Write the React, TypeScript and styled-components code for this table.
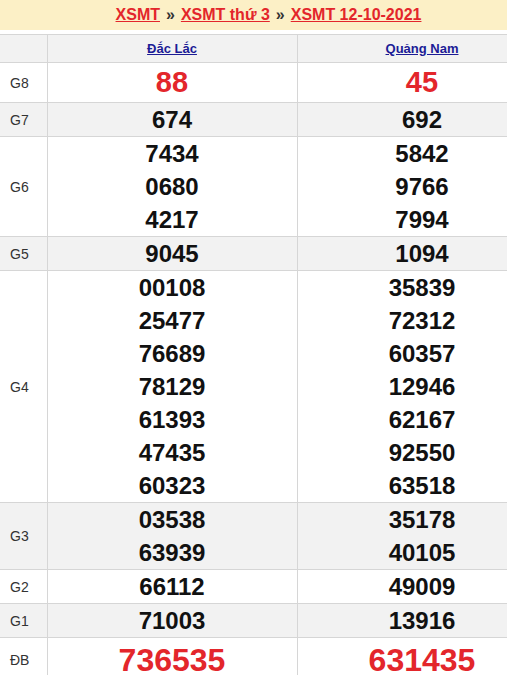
import React from 'react';
import styled, { createGlobalStyle } from 'styled-components';

const GlobalStyle = createGlobalStyle`
  html, body {
    margin: 0;
    padding: 0;
    overflow: hidden;
    background: #fff;
    font-family: "Liberation Sans", Arial, sans-serif;
  }
`;

const Page = styled.div`
  width: 507px;
`;

const Banner = styled.div`
  height: 30px;
  background: #fcf0c6;
  margin-bottom: 4px;
  padding-left: 30px;
  display: flex;
  align-items: center;
  justify-content: center;
  gap: 6px;
  font-size: 16px;
  font-weight: bold;
  color: #333;
`;

const BannerLink = styled.a`
  color: #e3262b;
  text-decoration: underline;
`;

const Table = styled.table`
  width: 547px;
  border-collapse: collapse;
  table-layout: fixed;
`;

const HeadCell = styled.th`
  background: #f2f2f2;
  border: 1px solid #d6d6d6;
  height: 27px;
  padding: 0;
  font-size: 13px;
  font-weight: bold;
  text-align: center;
  vertical-align: middle;
`;

const HeadLink = styled.a`
  color: #1c1c96;
  text-decoration: underline;
`;

const Row = styled.tr<{ $alt: boolean }>`
  background: ${p => (p.$alt ? '#f2f2f2' : '#fff')};
`;

const Label = styled.td`
  border: 1px solid #d6d6d6;
  border-left: none;
  padding: 0 0 0 10px;
  font-size: 14px;
  color: #333;
  vertical-align: middle;
`;

const Cell = styled.td`
  border: 1px solid #d6d6d6;
  padding: 0;
  text-align: center;
  vertical-align: middle;
`;

const Num = styled.div<{ $size: 'n' | 'g8' | 'db' }>`
  font-weight: bold;
  font-size: ${p => (p.$size === 'db' ? '32px' : p.$size === 'g8' ? '29px' : '24px')};
  line-height: ${p => (p.$size === 'db' ? '44px' : p.$size === 'g8' ? '39px' : '33px')};
  color: ${p => (p.$size === 'n' ? '#111' : '#e3262b')};
`;

type Prize = { name: string; a: string[]; b: string[]; size: 'n' | 'g8' | 'db' };

const prizes: Prize[] = [
  { name: 'G8', a: ['88'], b: ['45'], size: 'g8' },
  { name: 'G7', a: ['674'], b: ['692'], size: 'n' },
  { name: 'G6', a: ['7434', '0680', '4217'], b: ['5842', '9766', '7994'], size: 'n' },
  { name: 'G5', a: ['9045'], b: ['1094'], size: 'n' },
  {
    name: 'G4',
    a: ['00108', '25477', '76689', '78129', '61393', '47435', '60323'],
    b: ['35839', '72312', '60357', '12946', '62167', '92550', '63518'],
    size: 'n',
  },
  { name: 'G3', a: ['03538', '63939'], b: ['35178', '40105'], size: 'n' },
  { name: 'G2', a: ['66112'], b: ['49009'], size: 'n' },
  { name: 'G1', a: ['71003'], b: ['13916'], size: 'n' },
  { name: 'ĐB', a: ['736535'], b: ['631435'], size: 'db' },
];

export default function App() {
  return (
    <Page>
      <GlobalStyle />
      <Banner>
        <BannerLink href="#">XSMT</BannerLink>
        <span>»</span>
        <BannerLink href="#">XSMT thứ 3</BannerLink>
        <span>»</span>
        <BannerLink href="#">XSMT 12-10-2021</BannerLink>
      </Banner>
      <Table>
        <colgroup>
          <col style={{ width: 47 }} />
          <col style={{ width: 250 }} />
          <col style={{ width: 250 }} />
        </colgroup>
        <thead>
          <tr>
            <HeadCell style={{ borderLeft: 'none' }} />
            <HeadCell><HeadLink href="#">Đắc Lắc</HeadLink></HeadCell>
            <HeadCell><HeadLink href="#">Quảng Nam</HeadLink></HeadCell>
          </tr>
        </thead>
        <tbody>
          {prizes.map((p, i) => (
            <Row key={p.name} $alt={i % 2 === 1}>
              <Label>{p.name}</Label>
              <Cell>
                {p.a.map(n => <Num key={n} $size={p.size}>{n}</Num>)}
              </Cell>
              <Cell>
                {p.b.map(n => <Num key={n} $size={p.size}>{n}</Num>)}
              </Cell>
            </Row>
          ))}
        </tbody>
      </Table>
    </Page>
  );
}
